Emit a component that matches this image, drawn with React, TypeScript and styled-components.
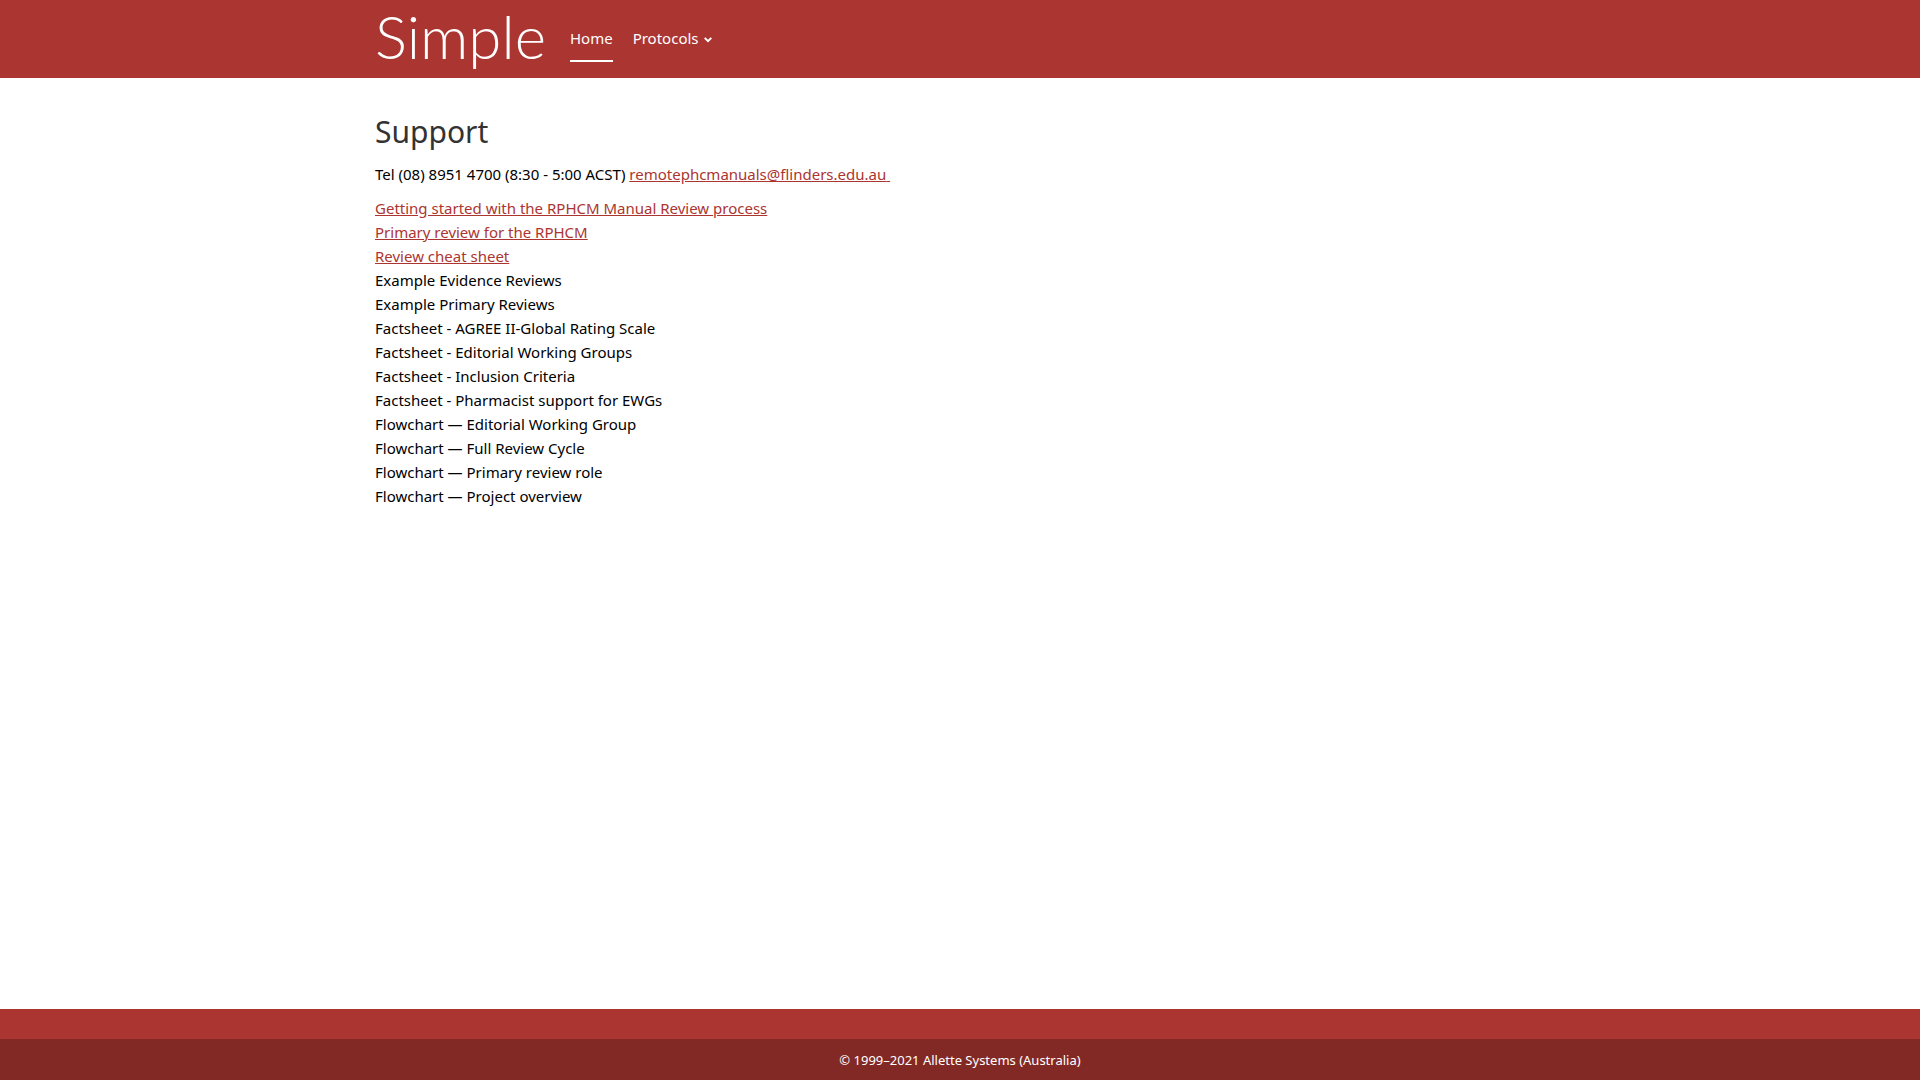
import React from "react";
import styled, { createGlobalStyle } from "styled-components";

const GlobalStyle = createGlobalStyle`
  *, *::before, *::after { box-sizing: border-box; }
  body {
    margin: 0;
    background: #fff;
    color: #000;
    font-family: "Segoe UI", "Noto Sans", "Open Sans", sans-serif;
    font-size: 15px;
    line-height: 24px;
  }
`;

const Page = styled.div`
  display: flex;
  flex-direction: column;
  min-height: 100vh;
`;

const Container = styled.div`
  width: 100%;
  max-width: 1200px;
  margin: 0 auto;
  padding: 0 15px;
`;

const Header = styled.header`
  background: #ab3531;
`;

const HeaderRow = styled(Container)`
  display: flex;
  align-items: stretch;
  gap: 24px;
  height: 78px;
`;

const Logo = styled.a`
  display: flex;
  align-items: flex-start;
  color: #fff;
  font-family: Lato, sans-serif;
  font-size: 60px;
  font-weight: 300;
  line-height: 72px;
  text-decoration: none;
`;

const Nav = styled.nav`
  display: flex;
  align-items: center;
  gap: 20px;
`;

const NavLink = styled.a<{ $active?: boolean }>`
  color: #fff;
  padding: 10px 0;
  border-bottom: 2px solid ${(p) => (p.$active ? "#fff" : "transparent")};
  text-decoration: none;
`;

const NavButton = styled.button`
  display: flex;
  align-items: center;
  gap: 5px;
  padding: 10px 0;
  border: 0;
  border-bottom: 2px solid transparent;
  background: none;
  color: #fff;
  font: inherit;
  cursor: pointer;
`;

const Chevron = styled.svg`
  width: 8px;
  height: 6px;
  margin-top: 4px;
`;

const Main = styled(Container).attrs({ as: "main" })`
  flex: 1;
  padding-top: 31px;
`;

const Title = styled.h1`
  margin: 0;
  color: #333;
  font-size: 30px;
  font-weight: 400;
  line-height: 46px;
`;

const Contact = styled.p`
  margin: 7px 0 10px;
`;

const TextLink = styled.a`
  color: #ab3531;
  text-decoration: underline;
`;

const DocumentList = styled.ul`
  margin: 0;
  padding: 0;
  list-style: none;
`;

const Footer = styled.footer`
  padding-top: 30px;
  background: #ab3531;
`;

const Copyright = styled.p`
  margin: 0;
  padding: 11px 0 10px;
  background: #822926;
  color: #fff;
  font-size: 13px;
  line-height: 20px;
  text-align: center;
`;

const guides = [
  "Getting started with the RPHCM Manual Review process",
  "Primary review for the RPHCM",
  "Review cheat sheet",
];

const documents = [
  "Example Evidence Reviews",
  "Example Primary Reviews",
  "Factsheet - AGREE II-Global Rating Scale",
  "Factsheet - Editorial Working Groups",
  "Factsheet - Inclusion Criteria",
  "Factsheet - Pharmacist support for EWGs",
  "Flowchart — Editorial Working Group",
  "Flowchart — Full Review Cycle",
  "Flowchart — Primary review role",
  "Flowchart — Project overview",
];

export default function App() {
  return (
    <Page>
      <GlobalStyle />
      <Header>
        <HeaderRow>
          <Logo href="#">Simple</Logo>
          <Nav>
            <NavLink href="#" $active>Home</NavLink>
            <NavButton type="button" aria-haspopup="true">
              Protocols
              <Chevron viewBox="0 0 8 6" fill="none" stroke="currentColor" strokeWidth="2" aria-hidden="true">
                <path d="M0.7 0.9 4 4.2 7.3 0.9" />
              </Chevron>
            </NavButton>
          </Nav>
        </HeaderRow>
      </Header>
      <Main>
        <Title>Support</Title>
        <Contact>
          Tel (08) 8951 4700 (8:30 - 5:00 ACST){" "}
          <TextLink href="mailto:remotephcmanuals@flinders.edu.au">remotephcmanuals@flinders.edu.au{"\u00a0"}</TextLink>
        </Contact>
        <DocumentList>
          {guides.map((name) => (
            <li key={name}>
              <TextLink href="#">{name}</TextLink>
            </li>
          ))}
          {documents.map((name) => (
            <li key={name}>{name}</li>
          ))}
        </DocumentList>
      </Main>
      <Footer>
        <Copyright>© 1999–2021 Allette Systems (Australia)</Copyright>
      </Footer>
    </Page>
  );
}
